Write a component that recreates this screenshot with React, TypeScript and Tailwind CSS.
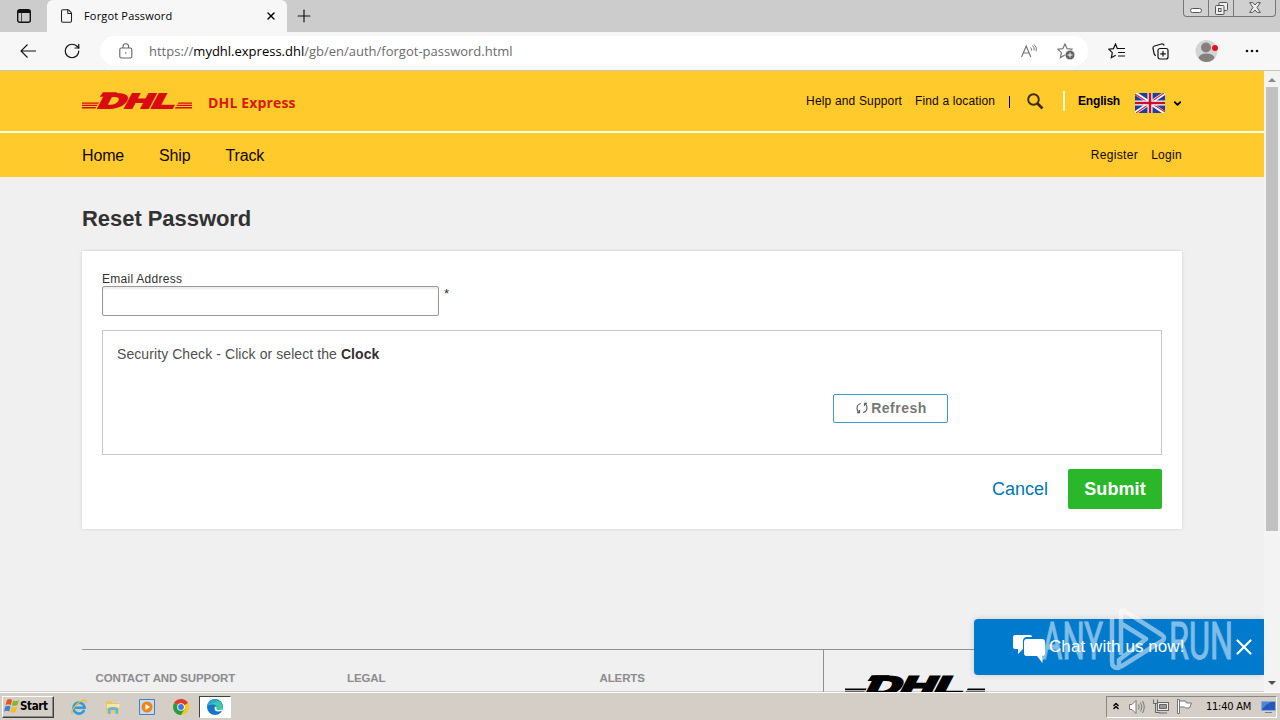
import { ChevronDown, ChevronsUp, File, Plus, RotateCw, X } from 'lucide-react';

const columns = [
  { label: 'CONTACT AND SUPPORT', className: 'w-[252px] pl-[13.5px]' },
  { label: 'LEGAL', className: 'w-[252px] pl-[13px]' },
  { label: 'ALERTS', className: 'w-[237px] pl-[13.5px]' },
];

function DhlLogo({ className, color }: { className: string; color: string }) {
  return (
    <svg viewBox="0 0 110 17" className={`overflow-visible ${className}`} preserveAspectRatio="none" fill={color} aria-label="DHL">
      <path d="M0 10.400h17l-.8 1.400H0zM0 12.700h15.600l-.8 1.400H0zM0 15h14.200l-.8 1.400H0z" />
      <path d="M96.500 10.400H110v1.400H95.700zM95.100 12.700H110v1.400H94.300zM93.700 15H110v1.400H92.900z" />
      <path d="M21 .2h14l-3 4.500H17.700z" />
      <text
        transform="translate(14.500 15.600) skewX(-28) scale(1.62 1)"
        fontFamily="Liberation Sans, sans-serif"
        fontWeight="700"
        fontSize="20.5"
        stroke={color}
        strokeWidth="1.9"
        textLength="47"
        lengthAdjust="spacingAndGlyphs"
      >
        DHL
      </text>
    </svg>
  );
}

function UkFlag() {
  return (
    <svg viewBox="0 0 30 20" className="w-[30px] h-5">
      <path fill="#1f3f98" d="M0 0h30v20H0z" />
      <path stroke="#fff" strokeWidth="3.4" d="m0 0 30 20M30 0 0 20" />
      <path stroke="#c3264a" strokeWidth="1.1" d="m0 1 14 9M30 19l-14-9M29 0 16 9M1 20l13-9" />
      <path stroke="#fff" strokeWidth="5" d="M15 0v20M0 10h30" />
      <path stroke="#c8102e" strokeWidth="2.6" d="M15 0v20M0 10h30" />
    </svg>
  );
}

function TitleBar() {
  return (
    <div className="flex h-8 bg-[#cccccc]">
      <div className="flex w-[47px] items-center justify-center">
        <svg viewBox="0 0 14 14" className="size-[14px]" fill="none" stroke="#111">
          <rect x=".7" y=".7" width="12.6" height="12.6" rx="2" strokeWidth="1.4" />
          <path d="M1 2.500h12" strokeWidth="3" />
          <path d="M4.500 4v9" strokeWidth=".7" />
        </svg>
      </div>
      <div className="flex w-60 items-center rounded-t-md bg-[#f7f7f7] pl-3 pr-[10px]">
        <File className="h-[18px] w-[15px] text-[#222]" strokeWidth={1.7} />
        <span className="ml-[10px] flex-1 whitespace-nowrap font-['Open_Sans',sans-serif] text-[11px] tracking-[0.17px] text-black">Forgot Password</span>
        <X className="size-3 text-black" strokeWidth={2.8} />
      </div>
      <Plus className="ml-[7px] mt-[6px] size-5 text-[#111]" strokeWidth={1.4} />
      <div className="ml-auto mr-1 flex h-[17px] w-[93px] rounded-b border border-t-0 border-[#777] bg-[#d0d0d0]">
        <div className="flex w-[25px] justify-center border-r border-[#777] pt-2">
          <div className="h-[5px] w-3 rounded-sm border border-[#555] bg-white" />
        </div>
        <div className="flex w-[25px] justify-center border-r border-[#777] pt-[2px]">
          <svg viewBox="0 0 13 13" className="size-[13px]" fill="#eee" stroke="#555">
            <rect x="4" y=".5" width="8.5" height="8" rx="1" />
            <rect x=".5" y="3.5" width="8.5" height="9" rx="1" />
            <rect x="3.5" y="6.5" width="2.5" height="3" />
          </svg>
        </div>
        <div className="flex flex-1 justify-center pt-[2px]">
          <svg viewBox="0 0 12 11" className="h-[11px] w-3" fill="#eee" stroke="#555">
            <path d="M.6.6h3.200L6 3 8.200.6h3.200L8 5.500l3.400 4.900H8.200L6 8l-2.200 2.400H.6L4 5.500z" />
          </svg>
        </div>
      </div>
    </div>
  );
}

function AddressBar() {
  return (
    <div className="flex h-[39px] items-center border-b border-[#c9c5b4] bg-[#f7f7f7]">
      <svg viewBox="0 0 16 14" className="ml-5 h-[14px] w-4" fill="none" stroke="#111" strokeWidth="1.1">
        <path d="M16 7H1M7.500.5 1 7l6.500 6.500" />
      </svg>
      <RotateCw className="ml-[27px] size-[18px] text-[#111]" strokeWidth={1.6} />
      <div className="ml-[19px] flex h-[30px] w-[988px] items-center rounded-full bg-white pl-[19px] pr-[13px]">
        <svg viewBox="0 0 14 16" className="h-4 w-[14px]" fill="none" stroke="#666" strokeWidth="1.1">
          <rect x=".8" y="5" width="12" height="10" rx="1.5" />
          <path d="M4 5V3.500a2.800 2.800 0 0 1 5.600 0V5" />
          <circle cx="6.800" cy="10" r=".8" fill="#666" stroke="none" />
        </svg>
        <span className="ml-4 mt-px flex-1 font-['Open_Sans',sans-serif] text-[13px] text-[#6c6c6c]">
          https://<span className="text-black">mydhl.express.dhl</span>/gb/en/auth/forgot-password.html
        </span>
        <svg viewBox="0 0 16 14" className="h-[14px] w-4" fill="none" stroke="#777">
          <path d="m.6 13 4.600-11 4.600 11M2.300 9h5.900" strokeWidth="1.2" />
          <path d="M9.500 3.500q1.500 1.300.8 3.200M11.500 1.500q2.500 2 1.500 5M13 .4q3.500 3 2.200 6.800" />
        </svg>
        <svg viewBox="0 0 18 17" className="ml-5 h-[17px] w-[18px]" fill="none" stroke="#777">
          <path d="m8 1 2 4.600 5 .6-3.700 3.400.8 5L8 12l-4.600 2.600 1-5L.8 6.200l5-.6z" strokeWidth="1.200" />
          <circle cx="13" cy="12" r="4.800" fill="#616161" stroke="#fff" strokeWidth=".6" />
          <path d="M13 9.500v5M10.500 12h5" stroke="#fff" />
        </svg>
      </div>
      <svg viewBox="0 0 17 16" className="ml-5 h-4 w-[17px]" fill="none" stroke="#111" strokeWidth="1.200">
        <path d="M9.500 6 7.500 1 5.500 5.600.8 6.200l3.500 3.500-.9 5 4.300-2.500M9.500 5.500H17M10 9.500h7M10 13h7" />
      </svg>
      <svg viewBox="0 0 17 17" className="ml-[27px] size-[17px]" fill="none" stroke="#111" strokeWidth="1.200">
        <rect x="6" y="5.500" width="10" height="10.500" rx="2" />
        <path d="M4 12.500q-1.500-.2-1.800-1.500L1 5.500Q.8 3.500 2.500 3l7-2q2-.4 2.700 1.500M11 8v5.500M8.300 10.800h5.500" />
      </svg>
      <svg viewBox="0 0 24 24" className="ml-[26px] size-6">
        <circle cx="11.500" cy="12" r="11" fill="#d4d4d4" />
        <circle cx="11" cy="8.500" r="5" fill="#858080" />
        <path d="M3.500 19q1-4.500 8-4.500t8 4.500q-3 4-8 4t-8-4z" fill="#858080" />
        <circle cx="20" cy="9" r="3" fill="#e8111a" />
      </svg>
      <svg viewBox="0 0 14 4" className="ml-[26px] h-1 w-[14px]" fill="#111">
        <circle cx="2" cy="2" r="1.300" />
        <circle cx="7" cy="2" r="1.300" />
        <circle cx="12" cy="2" r="1.300" />
      </svg>
    </div>
  );
}

function SiteHeader() {
  return (
    <header className="bg-[#ffca2c] text-[#120800]">
      <div className="mx-auto flex h-[60px] w-[1100px] items-center text-xs">
        <DhlLogo className="-mt-px h-[17px] w-[110px]" color="#d90a12" />
        <span className="ml-4 mt-1 font-['Open_Sans',sans-serif] text-[14px] font-bold tracking-[0.15px] text-[#d5190b]">DHL Express</span>
        <a href="#" className="ml-auto tracking-[0.16px]">Help and Support</a>
        <a href="#" className="ml-[13px] tracking-[0.13px]">Find a location</a>
        <span className="ml-[14px] mt-[2px] h-3 w-px bg-black" />
        <svg viewBox="0 0 17 17" className="ml-[17px] h-[17px] w-[17px]" fill="none" stroke="#3c2a05">
          <circle cx="6.500" cy="6.500" r="5.300" strokeWidth="1.900" />
          <path d="m10.500 10.500 5 5" strokeWidth="2.600" />
        </svg>
        <span className="ml-[19px] h-5 w-[2px] bg-[#fff6d5]" />
        <span className="ml-[13px] font-bold tracking-[-0.2px] text-black">English</span>
        <span className="ml-[15px] mt-1"><UkFlag /></span>
        <ChevronDown className="-mr-px ml-[7px] mt-1 size-[11px] text-black" strokeWidth={4} />
      </div>
      <div className="h-[2px] bg-[#fffbe8]" />
      <nav className="mx-auto flex h-11 w-[1100px] items-center text-base tracking-[-0.15px]">
        <a href="#" className="mt-[2px]">Home</a>
        <a href="#" className="ml-[35px] mt-[2px]">Ship</a>
        <a href="#" className="ml-[35px] mt-[2px]">Track</a>
        <a href="#" className="ml-auto text-xs tracking-[0.35px]">Register</a>
        <a href="#" className="ml-[13px] text-xs tracking-[0.3px]">Login</a>
      </nav>
    </header>
  );
}

function ResetForm() {
  return (
    <main className="mx-auto w-[1100px] pt-7">
      <h1 className="text-[22px] font-bold leading-7 tracking-[-0.05px] text-[#323232]">Reset Password</h1>
      <div className="mt-[18px] h-[278px] bg-white px-5 pt-[21px] text-[#323232] shadow-[0_0_3px_rgba(0,0,0,0.15)]">
        <label className="block text-xs leading-[14px] tracking-[0.27px]">Email Address</label>
        <div className="flex">
          <input className="h-[30px] w-[337px] rounded-[2px] border border-[#999] bg-white shadow-[inset_0_2px_2px_rgba(0,0,0,0.08)]" />
          <span className="ml-[5px] text-[13px] leading-4">*</span>
        </div>
        <section className="mt-[14px] h-[125px] border border-[#c8c8c8] px-[14px] pt-[13px]">
          <p className="text-sm tracking-[0.08px] text-[#505050]">
            Security Check - Click or select the <b className="text-[#323232]">Clock</b>
          </p>
          <button className="ml-[716px] mt-[30px] flex h-[29px] w-[115px] items-center justify-center rounded-[2px] border border-[#3a9ac9] pb-[2px] pl-[2px] text-sm font-bold tracking-[0.5px] text-[#777]">
            <svg viewBox="0 0 12 12" className="mr-[3px] size-3" fill="none" stroke="#666" strokeWidth="1.200">
              <path d="M5 1.500Q1 2.200 1 6.200 1 9 3 10.500M1 10.700h2.500V8M7 10.500q4-.7 4-4.700Q11 3 9 1.500M11 1.300H8.500V4" />
            </svg>
            Refresh
          </button>
        </section>
        <div className="mt-[14px] flex items-center justify-end">
          <a href="#" className="text-lg text-[#0077b3]">Cancel</a>
          <button className="ml-5 h-10 w-[94px] rounded-[2px] bg-[#2ab82a] text-lg font-bold tracking-[0.1px] text-white">Submit</button>
        </div>
      </div>
    </main>
  );
}

function SiteFooter() {
  return (
    <footer className="mx-auto mt-[120px] flex h-[43px] w-[1100px] border-t border-[#909090]">
      {columns.map((c) => (
        <div key={c.label} className={`pt-5 text-[11.5px] font-bold tracking-[-0.12px] text-[#8c8c8c] ${c.className}`}>{c.label}</div>
      ))}
      <div className="flex-1 border-l border-[#909090] pl-[21px] pt-[25px]">
        <DhlLogo className="h-[22px] w-[140px]" color="#000" />
      </div>
    </footer>
  );
}

function ChatWidget() {
  return (
    <div className="absolute bottom-[17px] right-0 flex h-14 w-[290px] items-center rounded-l bg-[#007acd] pl-[39px] text-white shadow-[0_0_6px_rgba(0,0,0,0.15)]">
      <svg viewBox="0 0 32 28" className="mt-1 h-7 w-8" fill="#fff">
        <path d="M2 0h15q2 0 2 2H14q-4 0-4 4v8l-5 5v-5H2q-2 0-2-2V2q0-2 2-2z" />
        <path d="M13.500 4H29q3 0 3 3v11q0 3-2.500 3v7L24 21H13.500Q11 21 11 18V7q0-3 2.500-3z" />
      </svg>
      <span className="ml-1 whitespace-nowrap text-[17px] tracking-[0.08px]">Chat with us now!</span>
      <X className="ml-auto mr-[7px] size-[26px]" strokeWidth={2} />
    </div>
  );
}

function Watermark() {
  return (
    <svg viewBox="0 0 196 64" className="pointer-events-none absolute bottom-[19px] right-[30px] h-16 w-[196px] overflow-visible" fill="#fff" opacity=".5">
      <g fontFamily="Roboto, sans-serif" fontSize="51" stroke="#fff" strokeWidth="1">
        <text x="4" y="50" textLength="61" lengthAdjust="spacingAndGlyphs">ANY</text>
        <text x="131" y="50" textLength="64" lengthAdjust="spacingAndGlyphs">RUN</text>
      </g>
      <path
        d="M83 46V2.500q0-2 3-.8L124 26q4 3 0 6L84 57q-3 2-3-1v-5l27-21-24-15M74 9v44q0 6 6 6l6-3"
        fill="none"
        stroke="#fff"
        strokeWidth="4.5"
        strokeLinejoin="round"
      />
    </svg>
  );
}

function ScrollBar() {
  return (
    <div className="flex w-4 flex-col items-center bg-[#f3f3f3]">
      <div className="mt-[7px] h-0 w-0 border-x-4 border-b-4 border-x-transparent border-b-[#8a8a8a]" />
      <div className="mt-[5px] h-[444px] w-3 bg-[#c1c1c1]" />
      <div className="mb-[7px] mt-auto h-0 w-0 border-x-4 border-t-4 border-x-transparent border-t-[#505050]" />
    </div>
  );
}

function TaskBar() {
  return (
    <div className="flex h-7 items-center border-t border-white bg-[#d5cec6] shadow-[0_-1px_0_#d5cec6]">
      <button className="ml-[2px] flex h-[22px] w-[52px] items-center border border-b-[#404040] border-l-white border-r-[#404040] border-t-white pl-px shadow-[inset_-1px_-1px_0_#888]">
        <svg viewBox="0 0 16 16" className="-mt-[2px] size-4">
          <path d="M3 2q3-2 5 0L7 7Q4 5.500 1.500 7z" fill="#e8521e" />
          <path d="M9 2.500q3 1.500 6-.5l-1.500 5Q11 8.500 8 7.200z" fill="#7db928" />
          <path d="M1.300 8.500q3-1.500 5.200 0l-1.300 5Q3 12 0 13.500z" fill="#3c7fd6" />
          <path d="M7.700 8.800q3 1.500 5.500 0l-1.500 5q-3 1.500-5.500 0z" fill="#f6bd20" />
        </svg>
        <span className="mt-px font-['DejaVu_Sans_Condensed','DejaVu_Sans',sans-serif] text-[11.5px] font-bold tracking-[-0.35px] text-black">Start</span>
      </button>
      {/* Internet Explorer */}
      <svg viewBox="0 0 16 16" className="ml-[17px] size-4" fill="none">
        <path d="M13.200 11A5.500 5.500 0 1 1 13.500 8.700H4" stroke="#2f9ade" strokeWidth="2.600" />
        <path d="M1.500 14.500C-1 12 6 3 13 1.200q3-.5 1.500 3" stroke="#eabb32" strokeWidth="1.300" />
      </svg>
      {/* Explorer */}
      <svg viewBox="0 0 16 16" className="ml-[18px] size-4">
        <path d="M1 2h5l1 2h7v10H1z" fill="#e8c866" />
        <path d="M2 5h13l-1 4H2z" fill="#f7e6a0" />
        <path d="M3 15V9q5-2 10 0v6h-2.500v-4h-5v4z" fill="#66b5df" />
      </svg>
      {/* Media Player */}
      <svg viewBox="0 0 16 16" className="ml-[18px] size-4">
        <path d="M.5.5h15v15H.5z" fill="#c4ddf2" stroke="#4781bb" />
        <circle cx="8" cy="8" r="5.500" fill="#f28416" />
        <path d="m6.500 5 4.500 3-4.500 3z" fill="#fff" />
      </svg>
      {/* Chrome */}
      <svg viewBox="0 0 16 16" className="ml-[18px] size-4">
        <circle cx="8" cy="8" r="8" fill="#f9c814" />
        <path d="M8 8 1.100 4A8 8 0 0 1 14.900 4z" fill="#dc3d2d" />
        <path d="M8 8 1.100 4A8 8 0 0 0 8 16l3.500-6z" fill="#289b49" />
        <circle cx="8" cy="8" r="3.800" fill="#fff" />
        <circle cx="8" cy="8" r="2.900" fill="#3e79df" />
      </svg>
      <div className="ml-[10px] flex h-[22px] w-8 items-center justify-center border border-b-white border-l-[#404040] border-r-white border-t-[#404040] bg-white">
        <svg viewBox="0 0 16 16" className="size-4">
          <circle cx="8" cy="8" r="8" fill="#1673c8" />
          <path d="M.2 7A8 8 0 0 1 16 8q0 4-4 4-3 0-2.500-2 1-4-3-4.500Q2 5 .2 7z" fill="#3ec9a0" />
          <path d="M.2 7Q1.500 1 8 .200 12 1 8 3.500 3 4 .2 7z" fill="#2aa7dc" />
          <path d="M7.500 9q0 4 5 3.500l3-1.200-.5-.8q-6 2-5.500-1 .5-1.500-.8-2Q7.500 7.800 7.500 9z" fill="#fff" />
        </svg>
      </div>
      <div className="ml-auto mr-[3px] flex h-[22px] w-[171px] items-center border border-b-white border-l-[#888] border-r-white border-t-[#888] pl-1">
        <ChevronsUp className="-mt-[2px] size-[10px] text-black" strokeWidth={3.5} />
        <svg viewBox="0 0 16 14" className="ml-2 h-[14px] w-4" fill="#fff" stroke="#777">
          <path d="M.5 4.500H3l4-4v13l-4-4H.5z" />
          <path d="M9.500 4.500q1.500 2.500 0 5M11.500 2.500q3 4.500 0 9M13.500 1q3.500 6 0 12" fill="none" />
        </svg>
        <svg viewBox="0 0 16 15" className="ml-2 h-[15px] w-4" fill="#eee" stroke="#666">
          <rect x="4.500" y="3.500" width="11" height="8" />
          <path d="M6.500 5.500h7v4h-7z" fill="#999" />
          <path d="M.5.500v4h4v-4M2.500 4.500v9h4M6 14h8" fill="none" />
        </svg>
        <svg viewBox="0 0 16 15" className="ml-2 h-[15px] w-4" fill="#fff" stroke="#777">
          <path d="M.5.500h2v14h-2zM2.500 2h6l1 2h5l-2 5H8.500L7.500 8h-5z" />
        </svg>
        <span className="ml-[13px] mt-[2px] whitespace-nowrap font-['DejaVu_Sans_Condensed','DejaVu_Sans',sans-serif] text-[11px] tracking-[-0.25px] text-black">11:40 AM</span>
        <svg viewBox="0 0 15 14" className="ml-auto h-[14px] w-[15px]">
          <path d="M.5 1.500h14v9H.5z" fill="#2558b8" stroke="#8aa9d9" />
          <path d="M1 2h9q-6 3-9 7z" fill="#4c87dc" />
          <path d="M4 12h7v1H4z" fill="#6f7f99" />
        </svg>
      </div>
    </div>
  );
}

export default function App() {
  return (
    <div className="flex h-[720px] w-[1280px] flex-col overflow-hidden bg-[#f0f0f0] font-['Liberation_Sans',Arial,sans-serif]">
      <TitleBar />
      <AddressBar />
      <div className="relative flex h-[621px]">
        <div className="relative w-[1264px] overflow-hidden">
          <SiteHeader />
          <ResetForm />
          <SiteFooter />
          <ChatWidget />
          <Watermark />
        </div>
        <ScrollBar />
      </div>
      <TaskBar />
    </div>
  );
}
